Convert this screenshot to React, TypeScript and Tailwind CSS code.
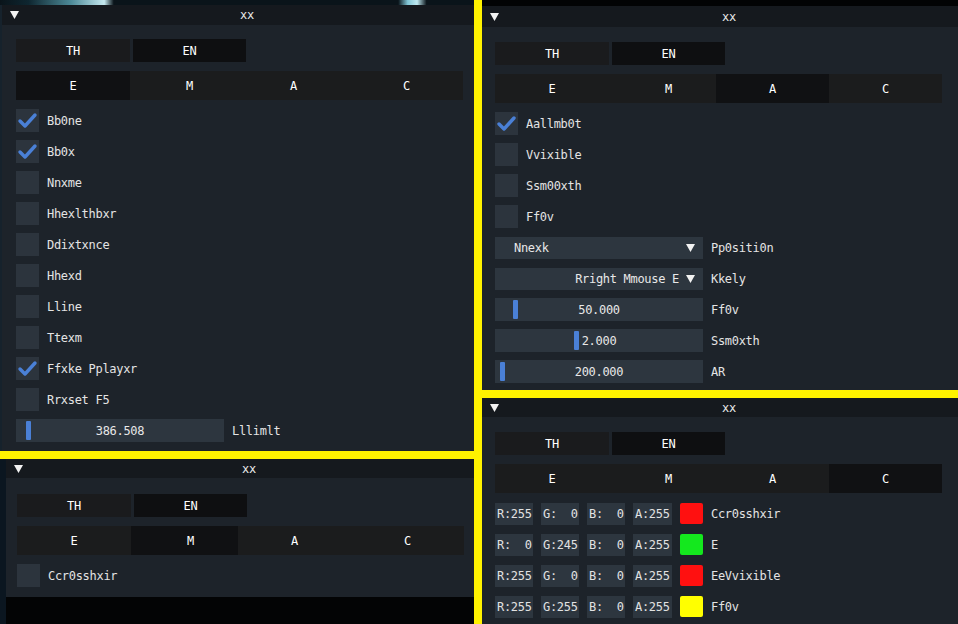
import React from 'react';

type Cat = 'E' | 'M' | 'A' | 'C';

const cats: { key: Cat; w: string; pad: string }[] = [
  { key: 'E', w: 'w-[114px]', pad: '' },
  { key: 'M', w: 'w-[107px]', pad: 'pl-[12px]' },
  { key: 'A', w: 'w-[113px]', pad: '' },
  { key: 'C', w: 'w-[113px]', pad: '' },
];

function Arrow({ size = 9 }: { size?: number }) {
  return (
    <svg width={size} height={size - 1} viewBox="0 0 9 8" className="shrink-0">
      <polygon points="0,0 9,0 4.5,8" fill="#f2f2f2" />
    </svg>
  );
}

function TitleBar({ h = 'h-[20px]' }: { h?: string }) {
  return (
    <div className={`grid ${h} grid-cols-[30px_1fr_12px] items-center bg-[#15191e] text-[#e8e8e8]`}>
      <div className="pl-[8px]">
        <Arrow />
      </div>
      <div className="text-center">xx</div>
      <div />
    </div>
  );
}

function LangRow() {
  return (
    <div className="flex h-[23px] gap-[3px]">
      <div className="flex w-[114px] items-center justify-center bg-[#1a1b1d] text-white">TH</div>
      <div className="flex w-[113px] items-center justify-center bg-[#0e0f11] text-white">EN</div>
    </div>
  );
}

function CatRow({ active }: { active: Cat }) {
  return (
    <div className="flex h-[29px]">
      {cats.map((c) => (
        <div
          key={c.key}
          className={`flex ${c.w} ${c.pad} items-center justify-center text-white ${
            active === c.key ? 'bg-[#101113]' : 'bg-[#1b1c1d]'
          }`}
        >
          {c.key}
        </div>
      ))}
    </div>
  );
}

function Check({ label, on = false }: { label: string; on?: boolean }) {
  return (
    <div className="flex h-[23px] items-center gap-[8px]">
      <div className="flex h-[23px] w-[23px] items-center justify-center bg-[#2c343d]">
        {on && (
          <svg width="23" height="23" viewBox="0 0 23 23">
            <polyline
              points="4,12 9,17 19,6"
              fill="none"
              stroke="#4a80d6"
              strokeWidth="3.4"
              strokeLinecap="round"
              strokeLinejoin="round"
            />
          </svg>
        )}
      </div>
      <span className="text-[#e4e4e4]">{label}</span>
    </div>
  );
}

function Slider({ value, label, grab }: { value: string; label: string; grab: number }) {
  return (
    <div className="flex h-[23px] items-center gap-[8px]">
      <div className="relative flex h-[23px] w-[208px] items-center justify-center bg-[#2d363f] text-[#e8e8e8]">
        <div className="absolute top-[2px] h-[19px] w-[5px] rounded-[1px] bg-[#4a80d6]" style={{ left: grab }} />
        <span className="relative">{value}</span>
      </div>
      <span className="text-[#e4e4e4]">{label}</span>
    </div>
  );
}

function Combo({ value, label, right = false }: { value: string; label: string; right?: boolean }) {
  return (
    <div className="flex h-[23px] items-center gap-[8px]">
      <div className="flex h-[22px] w-[208px] items-center bg-[#2d363f] pr-[8px] text-[#e8e8e8]">
        <span className={`flex-1 whitespace-pre ${right ? 'pr-[7px] text-right' : 'pl-[19px]'}`}>{value}</span>
        <Arrow />
      </div>
      <span className="text-[#e4e4e4]">{label}</span>
    </div>
  );
}

function ColorRow({ r, g, b, a, color, label }: { r: string; g: string; b: string; a: string; color: string; label: string }) {
  const box = 'flex h-[22px] w-[38px] items-center whitespace-pre bg-[#2d363f] pl-[2px] text-[#e2e2e2]';
  return (
    <div className="flex h-[23px] items-center gap-[8px]">
      <div className={box}>R:{r}</div>
      <div className={box}>G:{g}</div>
      <div className={box}>B:{b}</div>
      <div className={`${box} w-[39px]`}>A:{a}</div>
      <div className="h-[21px] w-[23px] rounded-[2px]" style={{ background: color }} />
      <span className="text-[#e4e4e4]">{label}</span>
    </div>
  );
}

function Body({ active, pt, pl, children }: { active: Cat; pt: string; pl: string; children: React.ReactNode }) {
  return (
    <div className={`flex flex-1 flex-col bg-[#1d232a] ${pt} ${pl}`}>
      <LangRow />
      <div className="mt-[9px] w-[447px]">
        <CatRow active={active} />
      </div>
      <div className="mt-[9px] flex flex-col gap-[8px]">{children}</div>
    </div>
  );
}

export default function App() {
  return (
    <div className="flex h-[624px] w-[958px] overflow-hidden bg-black font-['DejaVu_Sans_Mono',monospace] text-[12px] leading-none tracking-[-0.3px]">
      {/* left column */}
      <div className="flex w-[474px] flex-col">
        <div className="flex h-[451px] flex-col">
          <div className="h-[5px] bg-[linear-gradient(90deg,#0a141a_0%,#0e2630_6%,#4d8a98_15%,#c4e8ef_22%,#0a141a_24%,#0a141a_84%,#7fc4d4_86%,#bfe9f1_88%,#0a141a_90%)]" />
          <div className="flex flex-1 flex-col border-l-2 border-[#16222c]">
            <TitleBar />
            <Body active="E" pt="pt-[14px]" pl="pl-[14px]">
              <Check label="Bb0ne" on />
              <Check label="Bb0x" on />
              <Check label="Nnxme" />
              <Check label="Hhexlthbxr" />
              <Check label="Ddixtxnce" />
              <Check label="Hhexd" />
              <Check label="Lline" />
              <Check label="Ttexm" />
              <Check label="Ffxke Pplayxr" on />
              <Check label="Rrxset F5" />
              <Slider value="386.508" label="Lllimlt" grab={10} />
            </Body>
          </div>
        </div>
        <div className="h-[8px] bg-[#fff200]" />
        <div className="flex flex-1 bg-[#0b1620]">
          <div className="ml-[6px] flex flex-1 flex-col">
            <div className="flex h-[138px] flex-col">
              <TitleBar h="h-[19px]" />
              <Body active="M" pt="pt-[16px]" pl="pl-[11px]">
                <Check label="Ccr0sshxir" />
              </Body>
            </div>
            <div className="flex-1 bg-[#030405]" />
          </div>
        </div>
      </div>

      <div className="w-[8px] bg-[#fff200]" />

      {/* right column */}
      <div className="flex flex-1 flex-col">
        <div className="flex h-[390px] flex-col">
          <div className="h-[6px] bg-[#020304]" />
          <TitleBar h="h-[21px]" />
          <Body active="A" pt="pt-[15px]" pl="pl-[13px]">
            <Check label="Aallmb0t" on />
            <Check label="Vvixible" />
            <Check label="Ssm00xth" />
            <Check label="Ff0v" />
            <Combo value="Nnexk" label="Pp0siti0n" />
            <Combo value="Rright Mmouse E" label="Kkely" right />
            <Slider value="50.000" label="Ff0v" grab={18} />
            <Slider value="2.000" label="Ssm0xth" grab={79} />
            <Slider value="200.000" label="AR" grab={5} />
          </Body>
        </div>
        <div className="h-[8px] bg-[#fff200]" />
        <div className="flex flex-1 flex-col">
          <TitleBar h="h-[19px]" />
          <Body active="C" pt="pt-[15px]" pl="pl-[13px]">
            <ColorRow r="255" g="  0" b="  0" a="255" color="#ff1010" label="Ccr0sshxir" />
            <ColorRow r="  0" g="245" b="  0" a="255" color="#14e81e" label="E" />
            <ColorRow r="255" g="  0" b="  0" a="255" color="#ff1010" label="EeVvixible" />
            <ColorRow r="255" g="255" b="  0" a="255" color="#ffff00" label="Ff0v" />
          </Body>
        </div>
      </div>
    </div>
  );
}
